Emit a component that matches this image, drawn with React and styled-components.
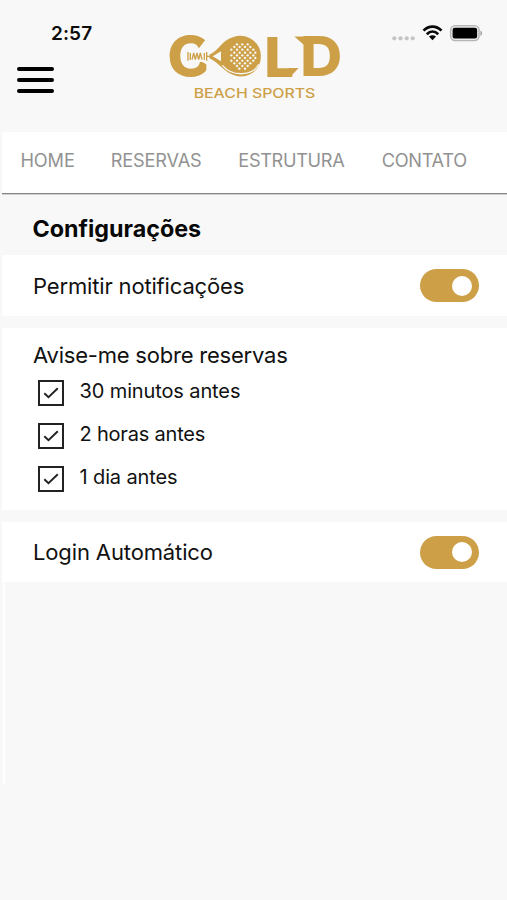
import React, { useState } from "react";
import styled, { createGlobalStyle } from "styled-components";

const GOLD = "#cda047";
const PAGE = "#f8f8f8";

const GlobalStyle = createGlobalStyle`
  *, *::before, *::after { box-sizing: border-box; }
  html, body { margin: 0; background: ${PAGE}; }
  body { font-family: Inter, "Liberation Sans", sans-serif; color: #111; overflow: hidden; }
`;

const Screen = styled.main`
  width: 507px;
  height: 900px;
  background: ${PAGE};
`;

const Header = styled.header`
  display: grid;
  grid-template-columns: 160px 190px 1fr;
  height: 132px;
`;

const LeftTools = styled.div`
  display: flex;
  flex-direction: column;
  align-items: flex-start;
`;

const Clock = styled.time`
  margin: 22px 0 0 51px;
  font-size: 19px;
  line-height: 24px;
  font-weight: 600;
  letter-spacing: 0.1px;
  color: #0b0b0b;
`;

const MenuButton = styled.button`
  display: flex;
  flex-direction: column;
  justify-content: space-between;
  width: 37px;
  height: 26px;
  margin: 20.5px 0 0 17px;
  padding: 0;
  border: 0;
  background: none;
`;

const MenuBar = styled.span`
  width: 37px;
  height: 4px;
  border-radius: 2px;
  background: #000;
`;

const Logo = styled.svg`
  width: 190px;
  height: 85px;
  margin-top: 25px;
  overflow: visible;
`;

const StatusIcons = styled.svg`
  width: 127px;
  height: 40px;
  margin: 15px 0 0 30px;
`;

const Nav = styled.nav`
  display: flex;
  gap: 37px;
  height: 62px;
  margin-left: 2px;
  padding-left: 18.5px;
  background: #fff;
  border-bottom: 1px solid #858585;
  box-shadow: 0 1px 0 #d0d0d0;
`;

const NavLink = styled.a`
  width: ${(p) => p.$width}px;
  line-height: 57px;
  font-size: 18.2px;
  letter-spacing: ${(p) => p.$track}px;
  white-space: nowrap;
  color: #929292;
`;

const Title = styled.h1`
  height: 61px;
  margin: 0;
  padding-left: 32.5px;
  font-size: 23.3px;
  line-height: 69px;
  font-weight: 700;
  letter-spacing: 0;
  color: #080808;
`;

const Card = styled.section`
  display: flex;
  flex-direction: ${(p) => (p.$stacked ? "column" : "row")};
  align-items: ${(p) => (p.$stacked ? "flex-start" : "center")};
  justify-content: ${(p) => (p.$stacked ? "flex-start" : "space-between")};
  height: ${(p) => p.$height}px;
  margin: 0 0 ${(p) => p.$gap || 0}px 2px;
  padding: ${(p) => (p.$stacked ? "13px 28px 0 31px" : "0 28px 0 31px")};
  background: #fff;
`;

const Label = styled.span`
  font-size: 22px;
  line-height: 28px;
  letter-spacing: ${(p) => p.$track}px;
`;

const Track = styled.button`
  display: flex;
  align-items: center;
  justify-content: ${(p) => (p.$on ? "flex-end" : "flex-start")};
  width: 59px;
  height: 33px;
  padding: 0 7px;
  border: 0;
  border-radius: 17px;
  background: ${(p) => (p.$on ? GOLD : "#c7c7c7")};
`;

const Knob = styled.span`
  width: 20px;
  height: 20px;
  border-radius: 50%;
  background: #fff;
`;

const Options = styled.div`
  display: flex;
  flex-direction: column;
  padding: 2.9px 0 0 5px;
`;

const Option = styled.div`
  display: flex;
  align-items: center;
  gap: 15.5px;
  height: 42.7px;
`;

const CheckBox = styled.button`
  display: flex;
  width: 26px;
  height: 26px;
  padding: 0;
  border: 2px solid #222;
  background: #fff;
  svg { width: 22px; height: 22px; }
`;

const OptionText = styled.span`
  font-size: 20px;
  line-height: 26px;
  margin-top: -4px;
  letter-spacing: ${(p) => p.$track}px;
`;

const Remainder = styled.div`
  height: 202px;
  margin-left: 3px;
  border-left: 2px solid #fff;
`;

const links = [
  { text: "HOME", width: 53.3, track: -0.15 },
  { text: "RESERVAS", width: 90.5, track: -0.17 },
  { text: "ESTRUTURA", width: 106.5, track: -0.34 },
  { text: "CONTATO", width: 85, track: -0.32 },
];

const reminders = [
  { text: "30 minutos antes", track: -0.12 },
  { text: "2 horas antes", track: -0.2 },
  { text: "1 dia antes", track: -0.12 },
];

// Perforations of the paddle: a row's y, then the x of every hole in it.
const holes = [
  [58, [231, 247, 263]],
  [66, [223, 239, 255, 271]],
  [74, [214, 231, 247, 263, 280]],
  [83, [223, 239, 255, 271, 286]],
  [91, [214, 231, 247, 263, 280]],
  [99, [223, 239, 255, 271, 286]],
  [107, [214, 231, 247, 263, 280]],
  [115, [223, 239, 255, 271]],
  [123, [231, 247, 263]],
  [131, [238, 255]],
];

function GoldLogo() {
  return (
    <Logo viewBox="0 0 570 255" fill={GOLD}>
      <g fontFamily="Inter" fontWeight="800" fontSize="164">
        <text x="22" y="154" textLength="136" lengthAdjust="spacingAndGlyphs">G</text>
        <text x="315" y="155" fontWeight="900" textLength="86" lengthAdjust="spacingAndGlyphs">L</text>
        <text x="421" y="154" textLength="126" lengthAdjust="spacingAndGlyphs">D</text>
      </g>
      <path d="M385 129H416L391 155H385Z M403 34.5H440V60H432Z" />
      <path d="M140 40L112 76H160V40Z M118 106H160V160H139V118Z M76 77H150V111H76Z" fill={PAGE} />
      <path
        d="M146 87C168 79 177 58 198 44C250 10 305 44 305 94C305 146 250 174 202 144C181 130 168 109 146 102Z"
        stroke={PAGE}
        strokeWidth="5"
      />
      <path d="M158 94L183 79V109Z" fill={PAGE} />
      <path d="M187 121C218 157 280 153 296 118" fill="none" stroke={PAGE} strokeWidth="4" />
      <path
        d="M84 81V107M91 84V104M96 104L101 84L106 104L111 84L116 104L121 84L126 104M133 84V104M140 81V107M140 94H158"
        fill="none"
        stroke={GOLD}
        strokeWidth="4"
      />
      {holes.map(([y, xs]) => xs.map((x) => <circle key={`${x}-${y}`} cx={x} cy={y} r="3.5" fill={PAGE} />))}
      <text
        x="101"
        y="220"
        fontFamily="Inter"
        fontSize="39"
        fontWeight="450"
        textLength="365"
        lengthAdjust="spacingAndGlyphs"
      >
        BEACH SPORTS
      </text>
    </Logo>
  );
}

function Status() {
  return (
    <StatusIcons viewBox="0 0 127 40">
      <g fill="#c4c4c4">
        <circle cx="14.3" cy="23.3" r="2.1" />
        <circle cx="20.5" cy="23.3" r="2.1" />
        <circle cx="26.7" cy="23.3" r="2.1" />
        <circle cx="32.7" cy="23.3" r="2.1" />
      </g>
      <g fill="none" stroke="#080808" strokeWidth="2.7">
        <path d="M43.5 15.6C48.8 10.2 56.2 10.2 61.5 15.6" />
        <path d="M46.8 19.2C50.3 15.8 54.7 15.8 58.2 19.2" />
      </g>
      <path d="M49 21.6C51.2 19.7 53.8 19.7 56 21.6L52.5 25.2Z" fill="#080808" />
      <rect x="70.6" y="10.6" width="28.5" height="15" rx="4.5" fill="#e9e9e9" stroke="#b5b5b5" strokeWidth="1.4" />
      <rect x="72.6" y="12.8" width="24.5" height="10.6" rx="2.2" fill="#000" />
      <path d="M100.3 15.5C102.8 16.2 102.8 20.2 100.3 21Z" fill="#a9a9a9" />
    </StatusIcons>
  );
}

function Toggle({ label }) {
  const [on, setOn] = useState(true);
  return (
    <Track $on={on} role="switch" aria-checked={on} aria-label={label} onClick={() => setOn(!on)}>
      <Knob />
    </Track>
  );
}

function Reminder({ text, track }) {
  const [checked, setChecked] = useState(true);
  return (
    <Option>
      <CheckBox role="checkbox" aria-checked={checked} aria-label={text} onClick={() => setChecked(!checked)}>
        {checked && (
          <svg viewBox="0 0 22 22">
            <path d="M4.3 11.2L8.5 15.3L17.8 6.3" fill="none" stroke="#222" strokeWidth="1.9" />
          </svg>
        )}
      </CheckBox>
      <OptionText $track={track}>{text}</OptionText>
    </Option>
  );
}

export default function App() {
  return (
    <>
      <GlobalStyle />
      <Screen>
        <Header>
          <LeftTools>
            <Clock>2:57</Clock>
            <MenuButton aria-label="Menu">
              <MenuBar />
              <MenuBar />
              <MenuBar />
            </MenuButton>
          </LeftTools>
          <GoldLogo />
          <Status />
        </Header>
        <Nav>
          {links.map((l) => (
            <NavLink key={l.text} $width={l.width} $track={l.track}>{l.text}</NavLink>
          ))}
        </Nav>
        <Title>Configurações</Title>
        <Card $height={61} $gap={12}>
          <Label $track={-0.16}>Permitir notificações</Label>
          <Toggle label="Permitir notificações" />
        </Card>
        <Card $height={182} $gap={12} $stacked>
          <Label $track={-0.21}>Avise-me sobre reservas</Label>
          <Options>
            {reminders.map((r) => <Reminder key={r.text} {...r} />)}
          </Options>
        </Card>
        <Card $height={60}>
          <Label $track={-0.13}>Login Automático</Label>
          <Toggle label="Login Automático" />
        </Card>
        <Remainder />
      </Screen>
    </>
  );
}
